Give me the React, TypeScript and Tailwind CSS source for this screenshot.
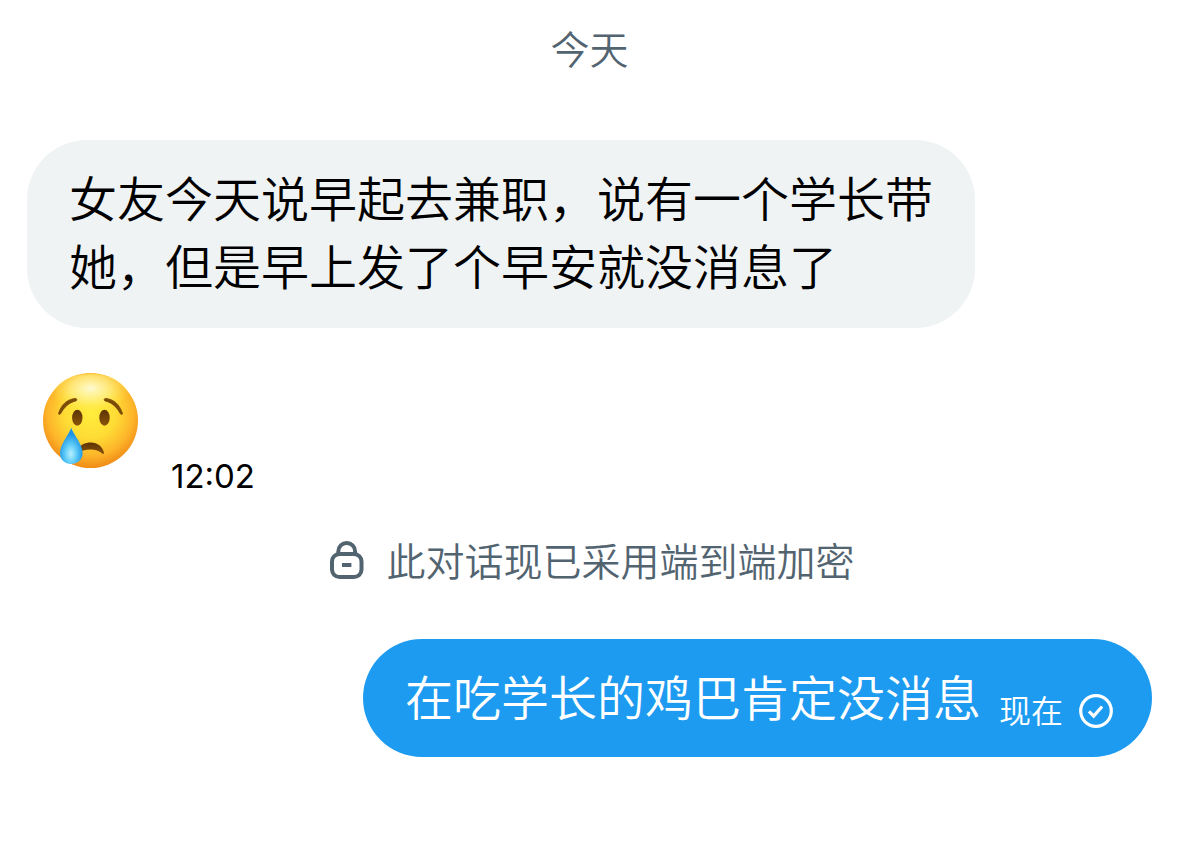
type Message = {
  text: string;
  time?: string;
};

const received: Message = {
  text: "女友今天说早起去兼职，说有一个学长带她，但是早上发了个早安就没消息了",
  time: "12:02",
};

const sent: Message = {
  text: "在吃学长的鸡巴肯定没消息",
  time: "现在",
};

function LockIcon() {
  return (
    <svg
      className="h-10 w-[34px] shrink-0"
      viewBox="0 -2 34 40"
      fill="none"
      stroke="currentColor"
      strokeWidth="4"
      aria-hidden="true"
    >
      <rect x="2" y="13" width="29.5" height="23" rx="7.5" />
      <path d="M8.3 13v-2.6a8.4 8.4 0 0 1 16.8 0V13" />
      <path d="M12 24h9.4" />
    </svg>
  );
}

function SentIcon() {
  return (
    <svg
      className="h-[34px] w-[34px] shrink-0"
      viewBox="0 0 34 34"
      fill="none"
      stroke="currentColor"
      aria-hidden="true"
    >
      <circle cx="17" cy="17" r="15.3" strokeWidth="3.2" />
      <path d="M10 17.4l4.7 4.7 8.4-9.6" strokeWidth="3.2" />
    </svg>
  );
}

function CryingFace() {
  return (
    <svg className="h-24 w-24 shrink-0" viewBox="0 0 96 96" role="img" aria-label="哭泣">
      <defs>
        <radialGradient id="face" cx="0.5" cy="0.42" r="0.6">
          <stop offset="0" stopColor="#ffed3c" />
          <stop offset="0.45" stopColor="#fedc35" />
          <stop offset="0.75" stopColor="#fdb52a" />
          <stop offset="1" stopColor="#ee8413" />
        </radialGradient>
        <radialGradient id="shine" cx="0.5" cy="0.3" r="0.5">
          <stop offset="0" stopColor="#fffbdc" stopOpacity="0.95" />
          <stop offset="0.5" stopColor="#fff6a0" stopOpacity="0.6" />
          <stop offset="1" stopColor="#fff04a" stopOpacity="0" />
        </radialGradient>
        <linearGradient id="brown" x1="0" y1="0" x2="0" y2="1">
          <stop offset="0" stopColor="#5c3304" />
          <stop offset="1" stopColor="#8a5409" />
        </linearGradient>
        <radialGradient id="tear" cx="0.48" cy="0.72" r="0.55">
          <stop offset="0" stopColor="#b9f0fd" />
          <stop offset="0.45" stopColor="#62cdf8" />
          <stop offset="1" stopColor="#1b93e6" />
        </radialGradient>
      </defs>
      <circle cx="47.5" cy="47.5" r="47.5" fill="url(#face)" />
      <ellipse cx="47.5" cy="25" rx="40" ry="24" fill="url(#shine)" />
      <path
        d="M15.6 40.2C18.4 31.5 24 26.2 32.4 25.4c1.6 0 1.9 2 .5 2.5-7 1.8-11.6 6-15.1 12.5-1 1.5-2.6 1.2-2.2-.2Z"
        fill="#7a4a08"
        stroke="#7a4a08"
        strokeWidth="0.8"
      />
      <path
        d="M79.4 40.2C76.6 31.5 71 26.2 62.6 25.4c-1.6 0-1.9 2-.5 2.5 7 1.8 11.6 6 15.1 12.5 1 1.5 2.6 1.2 2.2-.2Z"
        fill="#7a4a08"
        stroke="#7a4a08"
        strokeWidth="0.8"
      />
      <ellipse cx="34.3" cy="44.7" rx="5.2" ry="8" fill="url(#brown)" />
      <ellipse cx="61.5" cy="44.7" rx="5.2" ry="8" fill="url(#brown)" />
      <path
        d="M35 76.5c2-4.5 7-7 13-7 6.5 0 11.5 4.2 13 10.1.3 1.3-.9 1.7-1.9.8C56.4 77.9 52 76.5 47.5 76.5c-4.5 0-8 1-11.5 2.5Z"
        fill="url(#brown)"
      />
      <path
        d="M28.2 54.8C30.6 62 39.6 71 39.6 80.3c0 6.5-5.2 10.7-11.4 10.7S17 86.8 17 80.3C17 71 25.8 62 28.2 54.8Z"
        fill="url(#tear)"
      />
    </svg>
  );
}

export default function App() {
  return (
    <main
      lang="zh-CN"
      className="flex min-h-screen flex-col bg-white px-[27px] pt-[17px] font-['Noto_Sans_CJK_SC',sans-serif] font-[350]"
    >
      <h1 className="text-center text-[39px] leading-[60px] text-[#536471]">今天</h1>

      {/* Mensaje recibido */}
      <section className="mt-[63px] flex flex-col items-start">
        <p className="max-w-[948px] rounded-[60px] bg-[#eff3f4] px-[42px] pt-[22px] pb-[30px] text-5xl leading-[68px] text-black">
          {received.text}
        </p>
        <div className="mt-[45px] flex items-start pl-4">
          <CryingFace />
          <time className="mt-[83px] ml-8 font-['Inter',sans-serif] text-[33px] leading-10 font-normal text-black">
            {received.time}
          </time>
        </div>
      </section>

      <div className="mt-[33px] flex items-center justify-center gap-[22px] pl-1.5 text-[#536471]">
        <LockIcon />
        <p className="text-[39px] leading-[60px]">此对话现已采用端到端加密</p>
      </div>

      {/* Mensaje enviado */}
      <section className="mt-[50px] flex justify-end">
        <div className="flex items-end rounded-[60px] bg-[#1d9bf0] pt-[22px] pr-[39px] pb-[28px] pl-[42px] text-white">
          <p className="text-5xl leading-[68px]">{sent.text}</p>
          <div className="ml-[18px] flex items-center gap-4">
            <time className="pb-1 text-[32px] leading-8">{sent.time}</time>
            <SentIcon />
          </div>
        </div>
      </section>
    </main>
  );
}
